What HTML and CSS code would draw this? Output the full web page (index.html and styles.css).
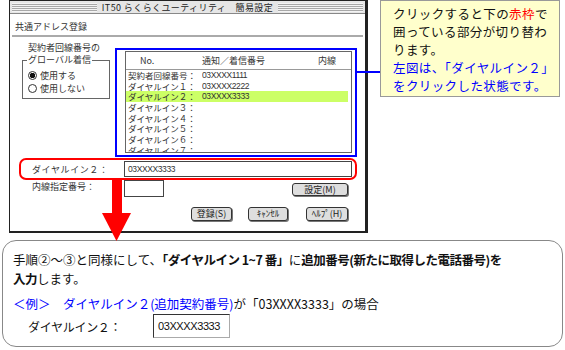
FILE: index.html
```html
<!DOCTYPE html>
<html>
<head>
<meta charset="utf-8">
<title>共通アドレス登録</title>
<link rel="stylesheet" href="styles.css">
</head>
<body>
<div class="page">

<div class="top">
  <!-- WINDOW -->
  <div class="win">
    <div class="titlebar"><div class="stripes"><span>IT50 らくらくユーティリティ　簡易設定</span></div></div>
    <div class="heading">共通アドレス登録</div>

    <div class="main">
      <div class="group">
        <div class="group-cap">契約者回線番号の</div>
        <fieldset>
          <legend>グローバル着信</legend>
          <div class="radio first"><span class="dot on"></span>使用する</div>
          <div class="radio"><span class="dot"></span>使用しない</div>
        </fieldset>
      </div>

      <div class="pick">
        <div class="list">
          <div class="list-head"><span>No.</span><span>通知／着信番号</span><span>内線</span></div>
          <div class="rows">
            <div class="row"><span class="lbl">契約者回線番号：</span><span class="num">03XXXX1111</span></div>
            <div class="row"><span class="lbl">ダイヤルイン１：</span><span class="num">03XXXX2222</span></div>
            <div class="row sel"><span class="lbl">ダイヤルイン２：</span><span class="num">03XXXX3333</span></div>
            <div class="row"><span class="lbl">ダイヤルイン３：</span></div>
            <div class="row"><span class="lbl">ダイヤルイン４：</span></div>
            <div class="row"><span class="lbl">ダイヤルイン５：</span></div>
            <div class="row"><span class="lbl">ダイヤルイン６：</span></div>
            <div class="row"><span class="lbl">ダイヤルイン７：</span></div>
          </div>
        </div>
      </div>
    </div>

    <div class="dial">
      <span class="dial-lbl">ダイヤルイン２：</span>
      <div class="field num">03XXXX3333</div>
    </div>

    <div class="ext">
      <span class="ext-lbl">内線指定番号：</span>
      <div class="field small"></div>
      <button class="btn set">設定(M)</button>
    </div>

    <div class="actions">
      <button class="btn reg">登録(S)</button>
      <button class="btn cancel">ｷｬﾝｾﾙ</button>
      <button class="btn help">ﾍﾙﾌﾟ(H)</button>
    </div>
  </div>

  <!-- CALLOUT -->
  <div class="callout">
    <div>クリックすると下の<span class="red">赤枠</span>で</div>
    <div>囲っている部分が切り替わ</div>
    <div>ります。</div>
    <div class="blue">左図は、「ダイヤルイン２」</div>
    <div class="blue">をクリックした状態です。</div>
  </div>
</div>

<!-- NOTE -->
<div class="note">
  <div class="line">手順②～③と同様にして、<b>「ダイヤルイン 1~7 番」</b>に<b>追加番号(新たに取得した電話番号)を</b></div>
  <div class="line"><b>入力</b>します。</div>
  <div class="line ex"><span class="blue">＜例＞　ダイヤルイン２(追加契約番号)</span>が「03XXXX3333」の場合</div>
  <div class="sample">
    <span class="sample-lbl">ダイヤルイン２：</span>
    <div class="sample-field">03XXXX3333</div>
  </div>
</div>

<!-- ARROW + LINK -->
<svg class="arrow" width="30" height="62" viewBox="0 0 30 62">
  <rect x="10" y="0" width="10" height="34" fill="#ff0000"/>
  <polygon points="0,33 29,33 14.5,61" fill="#ff0000"/>
</svg>
<div class="link"></div>

</div>
</body>
</html>
```

FILE: styles.css
```css
body{
  margin:0;
  background:#fff;
  color:#111;
  font-family:"Noto Sans CJK JP",sans-serif;
}

.page{position:relative;width:565px;height:350px;}
.top{display:flex;align-items:flex-start;}

/* WINDOW */
.win{
  box-sizing:border-box;
  width:359px;
  height:233px;
  margin-left:9px;
  border:1px solid #222;
  border-right-width:3px;
  border-bottom-width:2px;
  background:#fff;
  font-size:9px;
  color:#333;
}

.titlebar{
  box-sizing:border-box;
  height:13px;
  padding:2px 2px 0;
  background:#e6e6e6;
  border-bottom:1px solid #888;
}
.stripes{
  height:9px;
  display:flex;
  justify-content:center;
  align-items:center;
  background:repeating-linear-gradient(#f4f4f4 0 1px,#a8a8a8 1px 2px);
}
.stripes span{
  background:#e6e6e6;
  padding:0 5px;
  line-height:11px;
  letter-spacing:0.4px;
  color:#222;
}

.heading{
  margin:0 2px;
  padding:7px 3px 2px;
  line-height:12px;
  border-bottom:2px solid #aaa;
}

.main{display:flex;align-items:flex-start;}

.group{margin:5px 0 0 12px;width:88px;}
.group-cap{padding-left:6px;line-height:12px;}
fieldset{
  margin:0;
  padding:0 4px 3px;
  border:1px solid #666;
  min-width:0;
}
legend{padding:0 1px;line-height:12px;}
.radio{display:flex;align-items:center;line-height:13px;}
.radio.first{padding-top:3px;}
.dot{
  box-sizing:border-box;
  width:9px;
  height:9px;
  margin:0 3px 0 1px;
  border:1px solid #333;
  border-radius:50%;
  background:#fff;
}
.dot.on{background:radial-gradient(#111 0 2.5px,#fff 3px);}

.pick{
  margin:11px 0 0 5px;
  padding:1px 3px 2px 8px;
  border:2px solid #0000ff;
}
.list{
  box-sizing:border-box;
  width:227px;
  height:102px;
  border:1px solid #666;
  overflow:hidden;
}
.list-head{
  height:17px;
  border-bottom:1px solid #999;
  display:grid;
  grid-template-columns:62px 116px auto;
  align-items:center;
  padding-left:14px;
}
.rows{height:83px;overflow:hidden;}
.row{
  display:grid;
  grid-template-columns:74px auto;
  height:10.7px;
  line-height:10.7px;
  padding-left:2px;
  font-size:8.5px;
}
.row span{display:block;height:10.7px;overflow:hidden;}
.row.sel{background:#ccff66;margin-right:3px;}
.lbl{white-space:nowrap;}
.num{font-family:"Liberation Sans",sans-serif;font-size:8.5px;letter-spacing:-0.4px;}

.dial{
  box-sizing:border-box;
  width:338px;
  margin:1px 0 0 9px;
  padding:1px 3px 1px 0;
  display:flex;
  align-items:center;
  border:2px solid #ff0000;
  border-radius:7px;
}
.dial-lbl{box-sizing:border-box;width:103px;padding-left:11px;letter-spacing:0.6px;}
.field{
  box-sizing:border-box;
  border:1px solid #444;
  background:#fff;
}
.dial .field{width:228px;height:16px;line-height:14px;padding-left:3px;}

.ext{display:flex;align-items:flex-start;}
.ext-lbl{box-sizing:border-box;width:92px;margin-left:22px;line-height:14px;}
.field.small{width:40px;height:17px;}

.btn{
  box-sizing:border-box;
  height:14px;
  padding:0;
  font-family:inherit;
  font-size:9px;
  line-height:12px;
  color:#222;
  background:#dedede;
  border:1px solid #333;
  border-radius:3px;
  box-shadow:1px 1px 0 #777;
}
.set{width:56px;margin:3px 17px 0 auto;height:13px;}

.actions{display:flex;justify-content:flex-end;margin:10px 17px 0 0;}
.reg{width:41px;}
.cancel{width:40px;margin-left:16px;}
.help{width:42px;margin-left:18px;}

/* CALLOUT */
.callout{
  box-sizing:border-box;
  width:180px;
  height:97px;
  margin-left:12px;
  padding:3.5px 0 0 12px;
  border:1px solid #999;
  background:#ffffcc;
  font-size:12.5px;
  line-height:18.2px;
  letter-spacing:0.4px;
  white-space:nowrap;
  color:#111;
}
.red{color:#ff0000;}
.blue{color:#0000ff;}

/* NOTE */
.note{
  box-sizing:border-box;
  width:561px;
  height:107px;
  margin:7px 0 0 2px;
  padding:8.5px 0 0 10px;
  border:1px solid #888;
  border-radius:14px;
  font-size:12.5px;
  line-height:19px;
  white-space:nowrap;
}
.note b{letter-spacing:-0.5px;}
.ex{margin-top:6px;}
.sample{display:flex;align-items:center;margin-top:1.5px;height:24px;}
.sample-lbl{box-sizing:border-box;width:140px;padding-left:15px;font-size:12px;letter-spacing:-0.3px;}
.sample-field{
  box-sizing:border-box;
  width:77px;
  height:24px;
  padding-left:4px;
  line-height:22px;
  border:1px solid #333;
  border-right-color:#aaa;
  border-bottom-color:#aaa;
  font-family:"Liberation Sans",sans-serif;
  font-size:11px;
  letter-spacing:-0.4px;
}

/* ARROW + LINK */
.arrow{position:absolute;left:102px;top:180px;}
.link{
  position:absolute;
  left:357px;
  top:71px;
  width:23px;
  height:2px;
  background:#0000ff;
}
```
